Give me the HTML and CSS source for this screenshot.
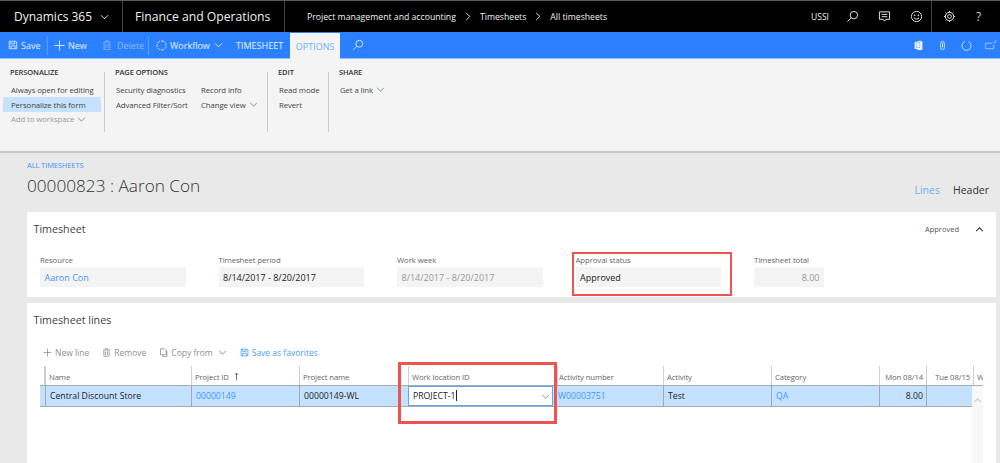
FILE: index.html
```html
<!DOCTYPE html>
<html lang="en">
<head>
<meta charset="utf-8">
<title>Timesheet 00000823</title>
<link rel="stylesheet" href="styles.css">
</head>
<body>
<header class="topbar">
  <div class="brand">Dynamics 365
    <svg class="ico-chev-lg" viewBox="0 0 10 6"><path d="M1 1l4 4 4-4"/></svg>
  </div>
  <div class="app">Finance and Operations</div>
  <nav class="crumbs">
    <span>Project management and accounting</span>
    <svg class="ico-gt" viewBox="0 0 6 10"><path d="M1 1l4 4-4 4"/></svg>
    <span>Timesheets</span>
    <svg class="ico-gt" viewBox="0 0 6 10"><path d="M1 1l4 4-4 4"/></svg>
    <span>All timesheets</span>
  </nav>
  <div class="top-right">
    <span class="company">USSI</span>
    <svg class="top-ico" viewBox="0 0 14 14"><circle cx="8.500" cy="5.500" r="4"/><path d="M5.500 8.500L1.500 12.500"/></svg>
    <svg class="top-ico" viewBox="0 0 14 14"><path d="M1.500 2h11v8h-4l-1.500 2-1.500-2h-4z"/><path d="M4 4.700h6M4 7.200h6"/></svg>
    <svg class="top-ico smile" viewBox="0 0 14 14"><circle cx="7" cy="7" r="5.500"/><circle cx="5" cy="5.700" r=".5"/><circle cx="9" cy="5.700" r=".5"/><path d="M4.200 8.300c1.400 1.900 4.200 1.900 5.600 0"/></svg>
    <div class="top-sep"></div>
    <svg class="top-ico gear" viewBox="0 0 14 14"><circle cx="7" cy="7" r="2"/><circle cx="7" cy="7" r="4.500"/><path d="M7 1v1.500M7 11.500V13M1 7h1.500M11.500 7H13M2.800 2.800l1 1M10.200 10.200l1 1M2.800 11.200l1-1M10.200 3.800l1-1"/></svg>
    <span class="help">?</span>
  </div>
</header>

<div class="actionbar">
  <button class="act a-save"><svg class="act-ico" viewBox="0 0 12 12"><path d="M1.500 1.500h8l1 1v8h-9z"/><path d="M3.500 1.500v3h4.500v-3M3.500 10.500v-3.500h5v3.500"/></svg>Save</button>
  <span class="act-sep"></span>
  <button class="act a-new"><svg class="act-ico wide" viewBox="0 0 12 12"><path d="M6 .5v11M.5 6h11"/></svg>New</button>
  <button class="act off"><svg class="act-ico" viewBox="0 0 12 12"><path d="M2.500 3v8.500h7V3M1.500 2.500h9M4.500 2.500V1h3v1.500M4.700 4.500v5M7.300 4.500v5"/></svg>Delete</button>
  <span class="act-sep"></span>
  <button class="act a-flow"><svg class="act-ico flow" viewBox="0 0 12 12"><path stroke-dasharray="3 1.300" d="M6 1a5 5 0 1 1-.01 0"/></svg>Workflow<svg class="chev-w" viewBox="0 0 10 6"><path d="M1 1l4 4 4-4"/></svg></button>
  <button class="tab">TIMESHEET</button>
  <button class="tab active">OPTIONS</button>
  <svg class="act-search" viewBox="0 0 14 14"><circle cx="8.500" cy="5.500" r="4"/><path d="M5.500 8.500L1.500 12.500"/></svg>
  <div class="act-right">
    <svg class="r-ico office" viewBox="0 0 12 12"><path d="M7.500.5L1.500 2.500v7l6 2 3-1v-9zM7.500 2.500L4 3.500v5l3.500-.5z"/></svg>
    <svg class="r-ico" viewBox="0 0 12 12"><path d="M4 3.500a2 2 0 0 1 4 0v5a2 2 0 0 1-4 0zM6 3v5"/></svg>
    <svg class="r-ico" viewBox="0 0 12 12"><path d="M8 1.700A5 5 0 1 1 4 1.700"/></svg>
    <svg class="r-ico dim" viewBox="0 0 12 12"><path d="M9.500 5v4.500h-9v-6h7.500M9 2.500h2.500V0"/></svg>
  </div>
</div>

<section class="ribbon">
  <div class="r-group g1">
    <h4>PERSONALIZE</h4>
    <a class="r-item">Always open for editing</a>
    <a class="r-item hl">Personalize this form</a>
    <a class="r-item muted">Add to workspace<svg class="chev-g" viewBox="0 0 10 6"><path d="M1 1l4 4 4-4"/></svg></a>
  </div>
  <div class="r-group g2">
    <h4>PAGE OPTIONS</h4>
    <div class="r-cols">
      <div class="r-col1">
        <a class="r-item">Security diagnostics</a>
        <a class="r-item">Advanced Filter/Sort</a>
      </div>
      <div>
        <a class="r-item">Record info</a>
        <a class="r-item">Change view<svg class="chev-g" viewBox="0 0 10 6"><path d="M1 1l4 4 4-4"/></svg></a>
      </div>
    </div>
  </div>
  <div class="r-group g3">
    <h4>EDIT</h4>
    <a class="r-item">Read mode</a>
    <a class="r-item">Revert</a>
  </div>
  <div class="r-group g4">
    <h4>SHARE</h4>
    <a class="r-item">Get a link<svg class="chev-g" viewBox="0 0 10 6"><path d="M1 1l4 4 4-4"/></svg></a>
  </div>
</section>

<main class="page">
  <div class="page-head">
    <div>
      <a class="back">ALL TIMESHEETS</a>
      <h1>00000823 : Aaron Con</h1>
    </div>
    <div class="views"><span class="v-on">Lines</span><span>Header</span></div>
  </div>

  <section class="card card-top">
    <div class="card-title">
      <h2>Timesheet</h2>
      <div class="card-status">Approved
        <svg class="chev-up" viewBox="0 0 10 6"><path d="M1 5l4-4 4 4"/></svg>
      </div>
    </div>
    <div class="fields">
      <div class="field w145"><label>Resource</label><div class="val link">Aaron Con</div></div>
      <div class="field w145"><label>Timesheet period</label><div class="val">8/14/2017 - 8/20/2017</div></div>
      <div class="field w145"><label>Work week</label><div class="val dis">8/14/2017 - 8/20/2017</div></div>
      <div class="field w145"><label>Approval status</label><div class="val">Approved</div><span class="redbox box-a"></span></div>
      <div class="field w70"><label>Timesheet total</label><div class="val dis num">8.00</div></div>
    </div>
  </section>

  <section class="card card-lines">
    <h2>Timesheet lines</h2>
    <div class="grid-bar">
      <span class="gb"><svg class="gb-ico" viewBox="0 0 12 12"><path d="M6 1v10M1 6h10"/></svg>New line</span>
      <span class="gb"><svg class="gb-ico" viewBox="0 0 12 12"><path d="M2.500 3v8h7V3M1.500 2.500h9M4.500 2.500V1h3v1.500M4.700 4.500v5M7.300 4.500v5"/></svg>Remove</span>
      <span class="gb"><svg class="gb-ico" viewBox="0 0 12 12"><path d="M2 1h5l2.500 2.500v5.500H2zM9.500 4h1v7.500H4.500V9"/></svg>Copy from<svg class="chev-g" viewBox="0 0 10 6"><path d="M1 1l4 4 4-4"/></svg></span>
      <span class="gb on"><svg class="gb-ico" viewBox="0 0 12 12"><path d="M1.500 1.500h8l1 1v8h-9z"/><path d="M3.500 1.500v3h4.500v-3M3.500 10.500v-3.500h5v3.500"/></svg>Save as favorites</span>
    </div>
    <div class="tbl">
      <div class="row head">
        <div class="c mark"></div>
        <div class="c">Name</div>
        <div class="c">Project ID<svg class="sort" viewBox="0 0 6 10"><path d="M3 9.500V1M1 3l2-2 2 2"/></svg></div>
        <div class="c">Project name</div>
        <div class="c">Work location ID</div>
        <div class="c nb">Activity number</div>
        <div class="c">Activity</div>
        <div class="c">Category</div>
        <div class="c r">Mon 08/14</div>
        <div class="c r">Tue 08/15</div>
        <div class="c clip">W</div>
      </div>
      <div class="row data">
        <div class="c mark"></div>
        <div class="c">Central Discount Store</div>
        <div class="c link">00000149</div>
        <div class="c">00000149-WL</div>
        <div class="c input">PROJECT-1<i class="caret"></i><svg class="chev-g sel" viewBox="0 0 10 6"><path d="M1 1l4 4 4-4"/></svg></div>
        <div class="c link nb">W00003751</div>
        <div class="c">Test</div>
        <div class="c link">QA</div>
        <div class="c r">8.00</div>
        <div class="c r"></div>
      </div>
      <div class="scroll"><svg class="chev-up light" viewBox="0 0 10 6"><path d="M1 5l4-4 4 4"/></svg></div>
      <span class="redbox box-b"></span>
    </div>
  </section>
</main>
</body>
</html>
```
FILE: styles.css
```css
* { box-sizing: border-box; }
html, body { margin: 0; height: 463px; overflow: hidden; }
body { font-family: "Open Sans", "Noto Sans", sans-serif; font-size: 8.5px; color: #333; background: #e9e9e9; }
svg { fill: none; stroke: currentColor; stroke-width: 1; flex: none; }
h1, h2, h4 { margin: 0; font-weight: 400; }
button { font: inherit; border: 0; background: none; padding: 0; color: inherit; }

/* top bar */
.topbar { height: 32px; background: #000; border-top: 1px solid #5a5a5a; color: #f0f0f0; display: flex; align-items: center; }
.brand { width: 123px; height: 100%; padding-left: 14px; font-size: 12px; display: flex; align-items: center; gap: 8px; border-right: 1px solid #444; }
.ico-chev-lg { width: 9px; height: 6px; }
.app { width: 162px; height: 100%; padding-left: 12px; font-size: 12.200px; display: flex; align-items: center; border-right: 1px solid #444; }
.crumbs { padding-left: 22px; font-size: 8.700px; display: flex; align-items: center; gap: 9px; }
.ico-gt { width: 6px; height: 9px; }
.top-right { margin-left: auto; height: 100%; display: flex; align-items: center; }
.company { font-size: 8.500px; margin-right: 17px; }
.top-ico { width: 13px; height: 13px; margin-right: 19px; }
.top-ico.smile { margin-right: 8px; }
.top-ico.gear { margin-right: 20px; }
.top-sep { width: 1px; height: 100%; background: #444; margin-right: 11px; }
.help { font-size: 12px; width: 24px; color: #ccc; }

/* action bar */
.actionbar { height: 27px; background: #2b80ff; border-bottom: 1px solid #8fbfff; color: #e6f0ff; display: flex; align-items: center; padding-left: 8px; font-size: 9px; }
.act { display: flex; align-items: center; gap: 3px; height: 100%; }
.act-ico { width: 10px; height: 10px; }
.act-ico.wide { width: 11px; height: 11px; }
.act-ico.flow { width: 11px; height: 11px; }
.a-save { width: 39px; }
.a-new { width: 44px; }
.act.off { color: #8db9f7; width: 46px; margin-left: 4px; gap: 5px; }
.act-sep { width: 1px; height: 19px; background: #5f9fff; margin: 0; }
.a-save + .act-sep { margin-right: 6px; }
.off + .act-sep { margin-right: 7px; }
.a-flow { width: 65px; gap: 3px; }
.chev-w { width: 9px; height: 6px; margin-left: 1px; }
.tab { height: 26px; padding-top: 1px; }
.actionbar .tab { margin-left: 15px; }
.actionbar .tab.active { margin: 1px 0 0 7px; width: 50px; height: 26px; background: #f4f4f4; color: #6cb0fb; }
.act-search { width: 12px; height: 12px; margin-left: 12px; }
.act-right { margin-left: auto; display: flex; align-items: center; gap: 13px; padding-right: 4px; color: #d5e6ff; }
.r-ico { width: 11px; height: 11px; }
.r-ico.office { fill: #fff; stroke: #2b80ff; stroke-width: .6; }
.r-ico.dim { color: #a5c9fb; }

/* ribbon */
.ribbon { height: 94px; background: #f4f4f4; border-bottom: 2px solid #c8c8c8; display: flex; padding-top: 7px; }
.r-group { height: 66px; background: linear-gradient(#ccc, #ccc) right 6px / 1px 60px no-repeat; }
.r-group h4 { font-size: 7.500px; font-weight: 600; color: #333; height: 14px; line-height: 12px; letter-spacing: -.1px; padding-left: 7px; margin-bottom: 2.500px; }
.g1 { width: 102px; margin: 0 3px; }
.g2 { width: 160px; }
.g3 { width: 61px; padding-left: 3px; }
.g4 { background: none; padding-left: 3px; }
.r-cols { display: flex; }
.r-col1 { width: 85px; }
.r-item { display: flex; align-items: center; gap: 3px; height: 14.700px; padding: 0 8px; font-size: 7.800px; color: #444; letter-spacing: -.1px; white-space: nowrap; }
.r-item.hl { background: #c6e2fd; width: 98px; }
.r-item.muted { color: #9a9a9a; }
.chev-g { width: 9px; height: 5px; color: #777; }

/* page */
.page { height: 310px; padding: 0 4px 0 27px; display: flex; flex-direction: column; gap: 6px; }
.page-head { height: 53px; padding-top: 7px; flex: none; display: flex; justify-content: space-between; align-items: flex-end; }
.page-head > div:first-child { align-self: flex-start; }
.back { display: block; font-size: 7.500px; color: #3f96fb; line-height: 10px; letter-spacing: -.1px; }
h1 { font-size: 17.200px; font-weight: 300; line-height: 24px; margin-top: 4px; color: #333; }
.views { display: flex; gap: 13px; font-size: 10.500px; padding: 0 7px 9px 0; color: #333; line-height: 14px; }
.v-on { color: #6cb0fb; }

.card { background: #fff; }
.card-top { height: 85px; flex: none; padding: 8px 7px 0 6.500px; }
.card-title { display: flex; justify-content: space-between; align-items: center; height: 18px; }
h2 { font-size: 10.700px; color: #444; }
.card-status { display: flex; align-items: center; gap: 16px; font-size: 7.500px; color: #555; padding-right: 5px; }
.chev-up { width: 9px; height: 5px; color: #444; stroke-width: 1.500; }
.chev-up.light { color: #ccc; }
.fields { display: flex; gap: 33px; padding: 18px 0 0 6.500px; }
.field { position: relative; }
.w145 { width: 145.500px; }
.w70 { width: 70px; }
.field label { display: block; font-size: 7.800px; line-height: 9px; color: #666; letter-spacing: -.1px; margin-bottom: 2px; }
.val { height: 20px; background: #f4f4f4; font-size: 9px; line-height: 21px; padding: 0 4.500px; color: #222; }
.val.link, .c.link { color: #3f96fb; }
.val.dis { color: #999; }
.val.num { text-align: right; }

.redbox { position: absolute; border: 2px solid #ef5350; pointer-events: none; }
.box-a { left: -4px; top: -4px; width: 160px; height: 44px; }
.box-b { left: 357.500px; top: -4.500px; width: 159.500px; height: 62px; border-width: 3px; }

.card-lines { flex: 1; padding: 8px 13px 0 6.500px; }
.card-lines h2 { height: 17px; line-height: 18px; }
.grid-bar { display: flex; gap: 10px; height: 16px; margin-top: 16px; padding-left: 6.500px; align-items: center; font-size: 8.500px; color: #8f8f8f; }
.gb { display: flex; align-items: center; gap: 2px; }
.gb.on { color: #4a9dfb; }
.gb-ico { width: 9px; height: 9px; color: #888; margin: 0 1px 0 3px; }
.gb.on .gb-ico { color: #3f96fb; }
.gb .chev-g { margin-left: 3px; }

.tbl { position: relative; margin: 6px 0 0 6.500px; }
.row { display: grid; grid-template-columns: 5px 146px 108px 109px 149px 106px 108px 108px 47px 47px 10px; }
.row.head { height: 20px; width: 943px; border-bottom: 1px solid #aaa; font-size: 7.700px; color: #666; letter-spacing: -.1px; }
.row.head .c { border-left: 1px solid #d0d0d0; padding: 5px 0 0 3px; line-height: 12px; white-space: nowrap; overflow: hidden; }
.row.head .c.mark { border-left: 1px solid #ccc; margin-left: 4px; padding: 0; }
.row.head .c.r { text-align: right; padding-right: 3px; }
.row.head .c.nb { padding-left: 1px; }
.sort { width: 5px; height: 9px; margin-left: 5px; color: #555; vertical-align: -1px; }
.row.data { height: 21px; width: 932px; background: #c4e2ff; border-bottom: 1px solid #aaa; font-size: 8.700px; color: #222; }
.row.data .c { line-height: 21px; padding-left: 4px; border-left: 1px solid #a8a8a8; white-space: nowrap; }
.row.data .c.mark { border: 0; padding: 0; }
.row.data .c.r { text-align: right; padding-right: 3px; }
.row.data .c.nb { padding-left: 1px; border-left: 0; }
.row.data .c.input { position: relative; background: #fff; border: 1px solid #5ca8f5; padding-left: 4px; line-height: 18px; height: 20px; margin-right: 4px; }
.caret { display: inline-block; width: 1px; height: 11px; background: #222; vertical-align: -2px; }
.sel { position: absolute; right: 2px; top: 7px; }
.scroll { position: absolute; left: 932px; top: 20px; width: 11px; height: 80px; background: #f8f8f8; padding: 12px 0 0 1px; }
.scroll svg { display: block; }
```
